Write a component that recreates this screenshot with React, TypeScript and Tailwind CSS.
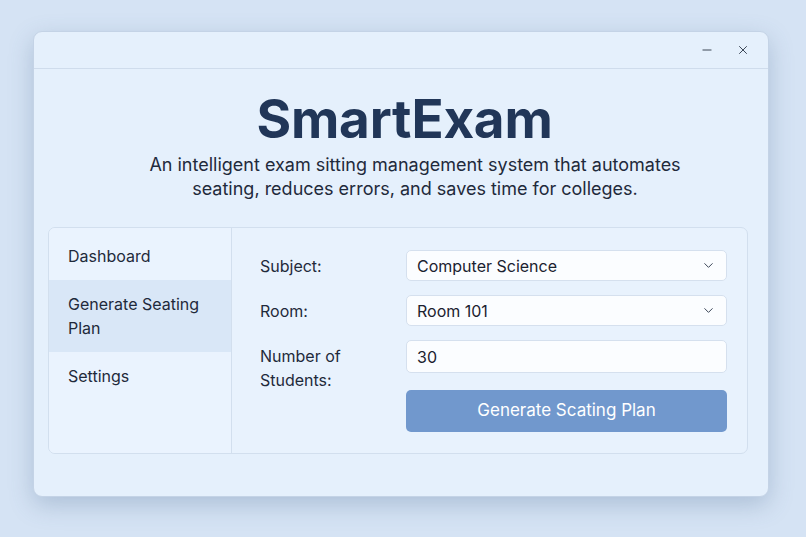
import { ChevronDown, Minus, X } from 'lucide-react';

const navItems = ['Dashboard', 'Generate Seating Plan', 'Settings'];

function SelectBox({ value }: { value: string }) {
    return (
        <div className="flex items-center justify-between h-[31px] px-[10px] bg-[#fbfdff] border border-[#d5e0ee] rounded-[5px]">
            <span className="text-[16px] text-[#1b2230]">{value}</span>
            <ChevronDown className="w-[15px] h-[15px] text-[#3b4658]" strokeWidth={1.6} />
        </div>
    );
}

export default function App() {
    return (
        <div className="w-[806px] h-[537px] bg-[#d5e3f4] pt-[31px] pl-[33px] font-['Inter','Noto_Sans',sans-serif]">
            <div className="w-[736px] h-[466px] flex flex-col bg-[#e5f0fc] rounded-[9px] border border-[#c4d3e6] shadow-[0_8px_24px_rgba(70,100,140,0.28)]">
                <div className="flex items-center justify-end h-[37px] border-b border-[#cfdcec] pr-[18px] gap-[22px]">
                    <Minus className="w-[14px] h-[14px] text-[#2f3a4a]" strokeWidth={1.6} />
                    <X className="w-[14px] h-[14px] text-[#2f3a4a]" strokeWidth={1.6} />
                </div>

                <div className="flex flex-col items-center pt-[19px]">
                    <h1 className="pl-[7px] text-[53px] leading-[62px] font-bold text-[#213658] tracking-[-0.2px]">SmartExam</h1>
                    <p className="mt-[3px] pl-[28px] text-[18px] leading-[24px] text-[#1f2a3b] text-center w-[588px]">
                        An intelligent exam sitting management system that automates seating, reduces errors, and saves time for colleges.
                    </p>
                </div>

                <div className="ml-[14px] mr-[20px] mt-[26px] h-[227px] flex bg-[#e8f2fd] border border-[#d2dfee] rounded-[7px] overflow-hidden">
                    <div className="w-[183px] flex flex-col border-r border-[#d2dfee] bg-[#eaf3fe] pt-[4px]">
                        {navItems.map((item) => (
                            <div
                                key={item}
                                className={
                                    item === 'Generate Seating Plan'
                                        ? 'px-[19px] py-[12px] bg-[#d9e7f7] text-[16px] leading-[24px] text-[#1f2a3b]'
                                        : 'px-[19px] py-[12px] text-[16px] leading-[24px] text-[#1f2a3b]'
                                }
                            >
                                {item === 'Generate Seating Plan' ? (
                                    <>
                                        Generate Seating
                                        <br />
                                        Plan
                                    </>
                                ) : (
                                    item
                                )}
                            </div>
                        ))}
                    </div>

                    <div className="flex-1 pl-[28px] pr-[20px] pt-[22px]">
                        <div className="grid grid-cols-[146px_1fr] gap-y-[14px] items-center">
                            <span className="text-[16px] text-[#1f2a3b]">Subject:</span>
                            <SelectBox value="Computer Science" />
                            <span className="text-[16px] text-[#1f2a3b]">Room:</span>
                            <SelectBox value="Room 101" />
                            <span className="pt-[4px] text-[16px] leading-[24px] text-[#1f2a3b]">
                                Number of
                                <br />
                                Students:
                            </span>
                            <div className="self-start flex items-center h-[33px] px-[10px] bg-[#fbfdff] border border-[#d5e0ee] rounded-[5px]">
                                <span className="text-[16px] text-[#1b2230]">30</span>
                            </div>
                            <div />
                            <button className="-mt-[16px] h-[42px] rounded-[5px] bg-[#7198cd] text-white text-[17px]">
                                Generate Scating Plan
                            </button>
                        </div>
                    </div>
                </div>
            </div>
        </div>
    );
}
